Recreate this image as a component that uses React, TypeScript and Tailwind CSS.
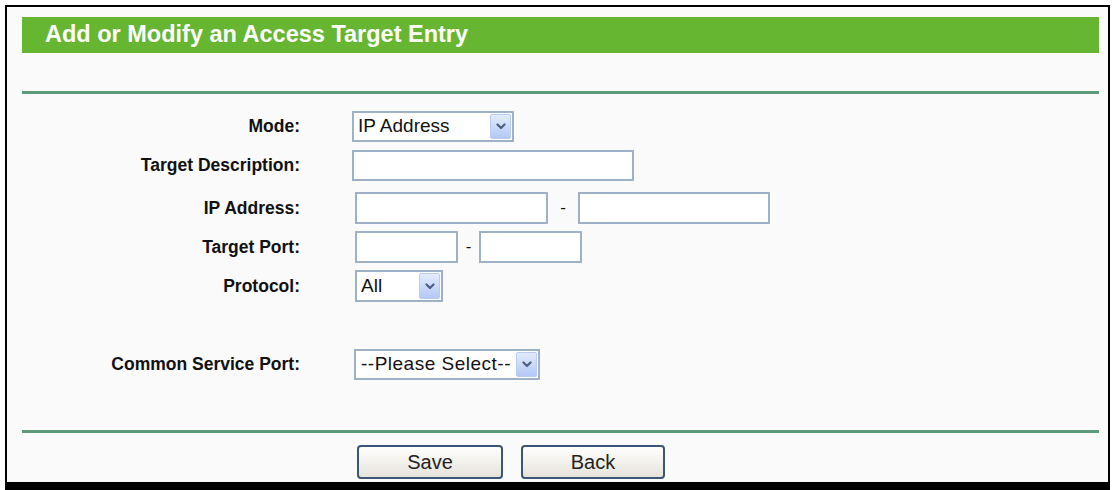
import React from "react";

function Arrow() {
  return (
    <div className="flex h-full w-[21px] shrink-0 items-center justify-center rounded-[2px] border border-[#b7cbf3] bg-gradient-to-b from-[#e3ecfd] to-[#b3c8f5]">
      <svg width="10" height="7" viewBox="0 0 10 7">
        <path d="M1.5 1.5 L5 5 L8.5 1.5" fill="none" stroke="#4d6185" strokeWidth="2.2" strokeLinecap="round" strokeLinejoin="round" />
      </svg>
    </div>
  );
}

function Select({ value, width, wide }: { value: string; width: string; wide?: boolean }) {
  return (
    <div className={`flex h-full items-stretch border-2 border-[#9fb1c6] bg-white p-[1px] ${width}`}>
      <div className={`flex flex-1 items-center whitespace-nowrap text-[19px] text-[#111] ${wide ? "pl-[4px] tracking-[0.5px]" : "pl-[3px]"}`}>{value}</div>
      <Arrow />
    </div>
  );
}

function TextBox({ width }: { width: string }) {
  return <div className={`h-full border-2 border-[#9fb1c6] bg-white ${width}`} />;
}

function Row({ label, height, top, offset, children }: { label: string; height: string; top: string; offset: string; children: React.ReactNode }) {
  return (
    <div className={`flex items-center ${height} ${top}`}>
      <div className="w-[278px] text-right text-[17.5px] font-bold text-[#111]">{label}</div>
      <div className={`flex h-full items-center ${offset}`}>{children}</div>
    </div>
  );
}

export default function App() {
  return (
    <div className="min-h-screen bg-white" style={{ fontFamily: '"Liberation Sans", Arial, sans-serif' }}>
      <div className="ml-[5px] pt-[5px]">
        <div className="w-[1105px] border-x-2 border-t-2 border-b-[8px] border-black bg-[#fafafa] pl-[15px] pr-[9px] pt-[10px] pb-[3px]">
          {/* Title bar */}
          <div className="flex h-[36px] items-center bg-[#66b632] pl-[23px] text-[23.5px] font-bold text-white">
            Add or Modify an Access Target Entry
          </div>

          <div className="mt-[38px] h-[3px] bg-[#5c9a7b]" />

          <Row label="Mode:" height="h-[31px]" top="mt-[17px]" offset="ml-[52px]">
            <Select value="IP Address" width="w-[162px]" />
          </Row>

          <Row label="Target Description:" height="h-[31px]" top="mt-[8px]" offset="ml-[52px]">
            <TextBox width="w-[282px]" />
          </Row>

          <Row label="IP Address:" height="h-[32px]" top="mt-[11px]" offset="ml-[55px]">
            <TextBox width="w-[193px]" />
            <span className="w-[30px] text-center text-[17px] text-[#111]">-</span>
            <TextBox width="w-[192px]" />
          </Row>

          <Row label="Target Port:" height="h-[32px]" top="mt-[7px]" offset="ml-[55px]">
            <TextBox width="w-[103px]" />
            <span className="w-[21px] text-center text-[17px] text-[#111]">-</span>
            <TextBox width="w-[103px]" />
          </Row>

          <Row label="Protocol:" height="h-[32px]" top="mt-[7px]" offset="ml-[55px]">
            <Select value="All" width="w-[88px]" />
          </Row>

          <Row label="Common Service Port:" height="h-[31px]" top="mt-[47px]" offset="ml-[54px]">
            <Select value="--Please Select--" width="w-[186px]" wide />
          </Row>

          <div className="mt-[50px] h-[3px] bg-[#5c9a7b]" />

          <div className="mt-[12px] flex h-[34px] gap-[18px] pl-[335px]">
            <button className="w-[146px] rounded-[4px] border-2 border-[#3a5676] bg-gradient-to-b from-white to-[#e6e3da] text-[20px] text-[#222]">
              Save
            </button>
            <button className="w-[144px] rounded-[4px] border-2 border-[#3a5676] bg-gradient-to-b from-white to-[#e6e3da] text-[20px] text-[#222]">
              Back
            </button>
          </div>
        </div>
      </div>
    </div>
  );
}
